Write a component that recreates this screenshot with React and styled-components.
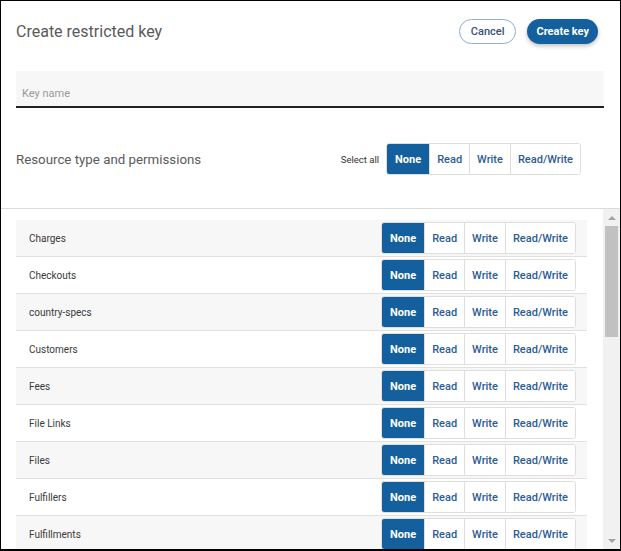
import React, { useLayoutEffect, useRef, useState } from "react";
import styled, { createGlobalStyle } from "styled-components";

const blue = "#14609e";
const linkBlue = "#2b5c98";

const GlobalStyle = createGlobalStyle`
  html, body {
    margin: 0;
    padding: 0;
    background: #fff;
    font-family: Roboto, "Liberation Sans", Arial, sans-serif;
  }
  * { box-sizing: border-box; }
`;

const RESOURCES = [
  "Charges",
  "Checkouts",
  "country-specs",
  "Customers",
  "Fees",
  "File Links",
  "Files",
  "Fulfillers",
  "Fulfillments",
  "Issuing Cards",
  "Orders",
  "Payment Intents",
  "Payment Methods",
  "Payouts",
  "Products",
  "Refunds",
  "Setup Intents",
  "Sources",
  "Subscriptions",
  "Tokens",
  "Transfers",
  "Webhook Endpoints",
  "Balance",
  "Disputes",
  "Events",
];

const LEVELS = ["None", "Read", "Write", "Read/Write"];
const ARROW = 17;

export default function App() {
  const [all, setAll] = useState("None");
  const [perms, setPerms] = useState(() =>
    Object.fromEntries(RESOURCES.map((r) => [r, "None"]))
  );
  const scroller = useRef(null);
  const [bar, setBar] = useState({ top: 0, size: 0 });

  // custom scrollbar: thumb size and offset come from the list's scroll state
  const measure = () => {
    const el = scroller.current;
    if (!el) return;
    const track = el.clientHeight - ARROW * 2;
    const size = Math.max(20, (track * el.clientHeight) / el.scrollHeight);
    const max = el.scrollHeight - el.clientHeight;
    const top = max > 0 ? (el.scrollTop / max) * (track - size) : 0;
    setBar({ top, size });
  };

  useLayoutEffect(measure, []);

  const selectAll = (level) => {
    setAll(level);
    setPerms(Object.fromEntries(RESOURCES.map((r) => [r, level])));
  };

  return (
    <>
      <GlobalStyle />
      <Dialog>
        <Top>
          <Header>
            <Title>Create restricted key</Title>
            <Actions>
              <OutlineButton>Cancel</OutlineButton>
              <PrimaryButton>Create key</PrimaryButton>
            </Actions>
          </Header>
          <KeyInput placeholder="Key name" />
          <SectionRow>
            <SectionTitle>Resource type and permissions</SectionTitle>
            <SelectAll>
              <SelectLabel>Select all</SelectLabel>
              <Segmented value={all} onChange={selectAll} />
            </SelectAll>
          </SectionRow>
        </Top>
        <ListArea>
          <List ref={scroller} onScroll={measure}>
            {RESOURCES.map((name, i) => (
              <Row key={name} $striped={i % 2 === 0}>
                <RowLabel>{name}</RowLabel>
                <Segmented
                  value={perms[name]}
                  onChange={(level) => setPerms({ ...perms, [name]: level })}
                />
              </Row>
            ))}
          </List>
          <Track>
            <ArrowButton $dir="up" onClick={() => scroller.current.scrollBy(0, -40)} />
            <Rail>
              <Thumb style={{ marginTop: bar.top, height: bar.size }} />
            </Rail>
            <ArrowButton $dir="down" onClick={() => scroller.current.scrollBy(0, 40)} />
          </Track>
        </ListArea>
      </Dialog>
    </>
  );
}

function Segmented({ value, onChange }) {
  return (
    <Group>
      {LEVELS.map((level) => (
        <Segment
          key={level}
          $active={value === level}
          onClick={() => onChange(level)}
        >
          {level}
        </Segment>
      ))}
    </Group>
  );
}

const Dialog = styled.div`
  width: 621px;
  height: 551px;
  border: 1px solid #000;
  border-bottom-width: 2px;
  display: flex;
  flex-direction: column;
  overflow: hidden;
  background: #fff;
`;

const Top = styled.div`
  padding: 0 16px 0 15px;
  border-bottom: 1px solid #dcdcdc;
  flex-shrink: 0;
`;

const Header = styled.div`
  display: flex;
  align-items: flex-start;
  justify-content: space-between;
  padding: 18px 6px 0 0;
  height: 70px;
`;

const Title = styled.h1`
  margin: 0;
  padding-top: 3px;
  font-size: 16px;
  font-weight: 400;
  color: #5a5a5a;
`;

const Actions = styled.div`
  display: flex;
  gap: 11px;
`;

const OutlineButton = styled.button`
  height: 25px;
  padding: 0 11px;
  border-radius: 13px;
  border: 1px solid #8fb0cf;
  background: #fff;
  color: #3a4f78;
  font-family: inherit;
  font-size: 11px;
  font-weight: 500;
  cursor: pointer;
`;

const PrimaryButton = styled.button`
  height: 25px;
  padding: 0 9px;
  border-radius: 13px;
  border: none;
  background: ${blue};
  color: #fff;
  font-family: inherit;
  font-size: 11px;
  font-weight: 700;
  box-shadow: 0 2px 4px rgba(0, 0, 0, 0.25);
  cursor: pointer;
`;

const KeyInput = styled.input`
  display: block;
  width: 100%;
  height: 37px;
  border: none;
  border-bottom: 2px solid #222;
  background: #f7f7f7;
  padding: 10px 6px 0;
  font-family: inherit;
  font-size: 11px;
  color: #333;
  outline: none;

  &::placeholder {
    color: #9a9a9a;
  }
`;

const SectionRow = styled.div`
  display: flex;
  align-items: center;
  justify-content: space-between;
  padding: 35px 23px 33px 0;
`;

const SectionTitle = styled.h2`
  margin: 0;
  font-size: 13.3px;
  font-weight: 400;
  color: #5a5a5a;
`;

const SelectAll = styled.div`
  display: flex;
  align-items: center;
  gap: 7px;
`;

const SelectLabel = styled.span`
  font-size: 9.5px;
  color: #333;
`;

const Group = styled.div`
  display: flex;
  height: 32px;
  border: 1px solid #dedede;
  border-radius: 3px;
  background: #fff;
  overflow: hidden;
`;

const Segment = styled.button`
  height: 100%;
  padding: 0 ${(p) => (p.$active ? "8px" : "7px")};
  border: none;
  border-left: 1px solid #dedede;
  background: ${(p) => (p.$active ? blue : "#fff")};
  color: ${(p) => (p.$active ? "#fff" : linkBlue)};
  font-family: inherit;
  font-size: 11px;
  font-weight: ${(p) => (p.$active ? 700 : 500)};
  cursor: pointer;

  &:first-child {
    border-left: none;
  }
`;

const ListArea = styled.div`
  flex: 1;
  min-height: 0;
  display: flex;
`;

const List = styled.div`
  flex: 1;
  overflow-y: auto;
  padding: 11px 16px 0 15px;
  scrollbar-width: none;

  &::-webkit-scrollbar {
    display: none;
  }
`;

const Track = styled.div`
  width: 17px;
  flex-shrink: 0;
  display: flex;
  flex-direction: column;
  background: #f1f1f1;
`;

const ArrowButton = styled.div`
  height: ${ARROW}px;
  flex-shrink: 0;
  display: flex;
  align-items: center;
  justify-content: center;

  &::after {
    content: "";
    width: 0;
    height: 0;
    border-left: 4px solid transparent;
    border-right: 4px solid transparent;
    ${(p) =>
      p.$dir === "up"
        ? "border-bottom: 4px solid #a3a3a3;"
        : "border-top: 4px solid #a3a3a3;"}
  }
`;

const Rail = styled.div`
  flex: 1;
  padding: 0 2px;
`;

const Thumb = styled.div`
  background: #c1c1c1;
`;

const Row = styled.div`
  display: flex;
  align-items: center;
  justify-content: space-between;
  height: 37px;
  padding: 0 11px 0 13px;
  border-bottom: 1px solid #e0e0e0;
  background: ${(p) => (p.$striped ? "#f7f7f7" : "#fff")};
`;

const RowLabel = styled.span`
  font-size: 10px;
  color: #3a3a3a;
`;
